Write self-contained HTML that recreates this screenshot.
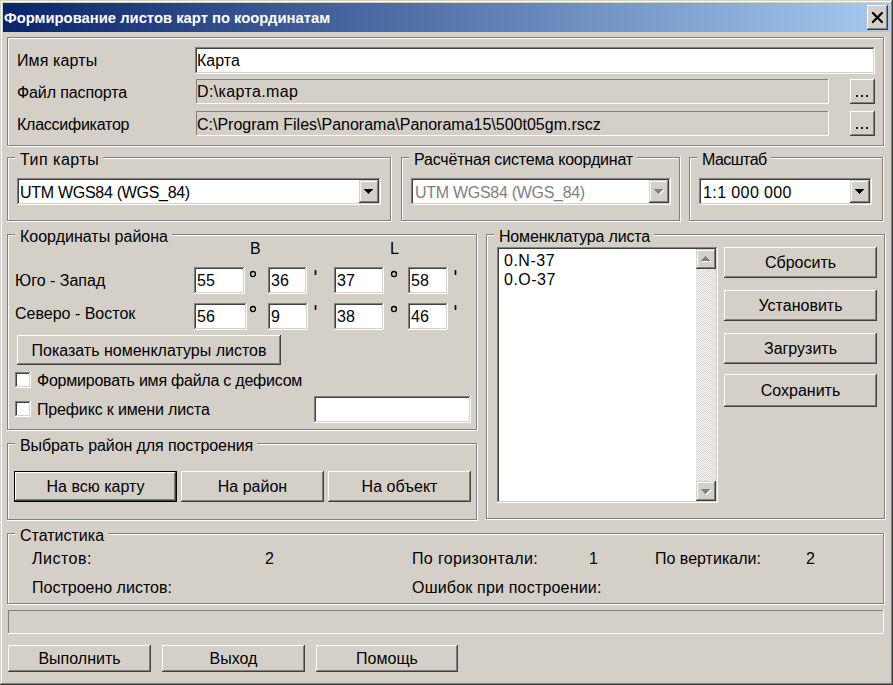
<!DOCTYPE html>
<html><head><meta charset="utf-8"><style>
html,body{margin:0;padding:0;width:893px;height:685px;overflow:hidden;background:#d4d0c8;}
div{position:absolute;box-sizing:border-box;}
.t{position:absolute;font-family:"Liberation Sans",sans-serif;font-size:16px;line-height:18px;color:#000;white-space:nowrap;}
.gl{background:#d4d0c8;padding:0 4px 0 5px;}
.tt{position:absolute;font-family:"Liberation Sans",sans-serif;font-weight:bold;font-size:14.8px;line-height:18px;color:#fff;white-space:nowrap;}
</style></head><body>
<div style="left:1px;top:1px;width:891px;height:683px;background:#d4d0c8;"></div>
<div style="left:0px;top:0px;width:892px;height:1px;background:#d4d0c8;"></div>
<div style="left:0px;top:0px;width:1px;height:684px;background:#d4d0c8;"></div>
<div style="left:0px;top:684px;width:893px;height:1px;background:#404040;"></div>
<div style="left:892px;top:0px;width:1px;height:685px;background:#404040;"></div>
<div style="left:1px;top:1px;width:890px;height:1px;background:#ffffff;"></div>
<div style="left:1px;top:1px;width:1px;height:682px;background:#ffffff;"></div>
<div style="left:1px;top:683px;width:891px;height:1px;background:#808080;"></div>
<div style="left:891px;top:1px;width:1px;height:683px;background:#808080;"></div>
<div style="left:3px;top:3px;width:887px;height:29px;background:linear-gradient(to right,#0a246a,#a6caf0);"></div>
<span class="tt" style="left:4px;top:9px;">Формирование листов карт по координатам</span>
<div style="left:868px;top:6px;width:19px;height:23px;background:#d4d0c8;"></div>
<div style="left:867px;top:5px;width:20px;height:1px;background:#ffffff;"></div>
<div style="left:867px;top:5px;width:1px;height:24px;background:#ffffff;"></div>
<div style="left:867px;top:29px;width:21px;height:1px;background:#404040;"></div>
<div style="left:887px;top:5px;width:1px;height:25px;background:#404040;"></div>
<div style="left:868px;top:6px;width:18px;height:1px;background:#d4d0c8;"></div>
<div style="left:868px;top:6px;width:1px;height:22px;background:#d4d0c8;"></div>
<div style="left:868px;top:28px;width:19px;height:1px;background:#808080;"></div>
<div style="left:886px;top:6px;width:1px;height:23px;background:#808080;"></div>
<svg style="position:absolute;left:867px;top:5px" width="21" height="25"><path d="M5.9 8 L14.9 17 M14.9 8 L5.9 17" stroke="#000" stroke-width="2.2" stroke-linecap="round" fill="none"/></svg>
<div style="left:7px;top:37px;width:877px;height:1px;background:#808080;"></div>
<div style="left:7px;top:37px;width:1px;height:109px;background:#808080;"></div>
<div style="left:7px;top:146px;width:878px;height:1px;background:#ffffff;"></div>
<div style="left:884px;top:37px;width:1px;height:110px;background:#ffffff;"></div>
<div style="left:8px;top:38px;width:875px;height:1px;background:#ffffff;"></div>
<div style="left:8px;top:38px;width:1px;height:107px;background:#ffffff;"></div>
<div style="left:8px;top:145px;width:876px;height:1px;background:#808080;"></div>
<div style="left:883px;top:38px;width:1px;height:108px;background:#808080;"></div>
<span class="t" style="left:17px;top:52px;letter-spacing:0.12px;">Имя карты</span>
<span class="t" style="left:17px;top:84px;letter-spacing:-0.12px;">Файл паспорта</span>
<span class="t" style="left:17px;top:116px;letter-spacing:-0.25px;">Классификатор</span>
<div style="left:195px;top:47px;width:679px;height:1px;background:#808080;"></div>
<div style="left:195px;top:47px;width:1px;height:26px;background:#808080;"></div>
<div style="left:195px;top:73px;width:680px;height:1px;background:#ffffff;"></div>
<div style="left:874px;top:47px;width:1px;height:27px;background:#ffffff;"></div>
<div style="left:197px;top:49px;width:676px;height:23px;background:#ffffff;"></div>
<div style="left:196px;top:48px;width:677px;height:1px;background:#404040;"></div>
<div style="left:196px;top:48px;width:1px;height:24px;background:#404040;"></div>
<div style="left:196px;top:72px;width:678px;height:1px;background:#d4d0c8;"></div>
<div style="left:873px;top:48px;width:1px;height:25px;background:#d4d0c8;"></div>
<span class="t" style="left:197px;top:52px;">Карта</span>
<div style="left:196px;top:79px;width:632px;height:1px;background:#808080;"></div>
<div style="left:196px;top:79px;width:1px;height:24px;background:#808080;"></div>
<div style="left:196px;top:103px;width:633px;height:1px;background:#ffffff;"></div>
<div style="left:828px;top:79px;width:1px;height:25px;background:#ffffff;"></div>
<span class="t" style="left:197px;top:83px;letter-spacing:0.36px;">D:\карта.map</span>
<div style="left:196px;top:111px;width:632px;height:1px;background:#808080;"></div>
<div style="left:196px;top:111px;width:1px;height:24px;background:#808080;"></div>
<div style="left:196px;top:135px;width:633px;height:1px;background:#ffffff;"></div>
<div style="left:828px;top:111px;width:1px;height:25px;background:#ffffff;"></div>
<span class="t" style="left:197px;top:116px;">C:\Program Files\Panorama\Panorama15\500t05gm.rscz</span>
<div style="left:851px;top:80px;width:23px;height:23px;background:#d4d0c8;"></div>
<div style="left:850px;top:79px;width:24px;height:1px;background:#ffffff;"></div>
<div style="left:850px;top:79px;width:1px;height:24px;background:#ffffff;"></div>
<div style="left:850px;top:103px;width:25px;height:1px;background:#404040;"></div>
<div style="left:874px;top:79px;width:1px;height:25px;background:#404040;"></div>
<div style="left:851px;top:80px;width:22px;height:1px;background:#d4d0c8;"></div>
<div style="left:851px;top:80px;width:1px;height:22px;background:#d4d0c8;"></div>
<div style="left:851px;top:102px;width:23px;height:1px;background:#808080;"></div>
<div style="left:873px;top:80px;width:1px;height:23px;background:#808080;"></div>
<div style="left:856px;top:95px;width:2px;height:2px;background:#1a1a1a;"></div>
<div style="left:861px;top:95px;width:2px;height:2px;background:#1a1a1a;"></div>
<div style="left:866px;top:95px;width:2px;height:2px;background:#1a1a1a;"></div>
<div style="left:851px;top:112px;width:23px;height:23px;background:#d4d0c8;"></div>
<div style="left:850px;top:111px;width:24px;height:1px;background:#ffffff;"></div>
<div style="left:850px;top:111px;width:1px;height:24px;background:#ffffff;"></div>
<div style="left:850px;top:135px;width:25px;height:1px;background:#404040;"></div>
<div style="left:874px;top:111px;width:1px;height:25px;background:#404040;"></div>
<div style="left:851px;top:112px;width:22px;height:1px;background:#d4d0c8;"></div>
<div style="left:851px;top:112px;width:1px;height:22px;background:#d4d0c8;"></div>
<div style="left:851px;top:134px;width:23px;height:1px;background:#808080;"></div>
<div style="left:873px;top:112px;width:1px;height:23px;background:#808080;"></div>
<div style="left:856px;top:127px;width:2px;height:2px;background:#1a1a1a;"></div>
<div style="left:861px;top:127px;width:2px;height:2px;background:#1a1a1a;"></div>
<div style="left:866px;top:127px;width:2px;height:2px;background:#1a1a1a;"></div>
<div style="left:7px;top:157px;width:384px;height:1px;background:#808080;"></div>
<div style="left:7px;top:157px;width:1px;height:64px;background:#808080;"></div>
<div style="left:7px;top:221px;width:385px;height:1px;background:#ffffff;"></div>
<div style="left:391px;top:157px;width:1px;height:65px;background:#ffffff;"></div>
<div style="left:8px;top:158px;width:382px;height:1px;background:#ffffff;"></div>
<div style="left:8px;top:158px;width:1px;height:62px;background:#ffffff;"></div>
<div style="left:8px;top:220px;width:383px;height:1px;background:#808080;"></div>
<div style="left:390px;top:158px;width:1px;height:63px;background:#808080;"></div>
<span class="t gl" style="left:15px;top:151px;letter-spacing:0.5px">Тип карты</span>
<div style="left:17px;top:178px;width:363px;height:1px;background:#808080;"></div>
<div style="left:17px;top:178px;width:1px;height:26px;background:#808080;"></div>
<div style="left:17px;top:204px;width:364px;height:1px;background:#ffffff;"></div>
<div style="left:380px;top:178px;width:1px;height:27px;background:#ffffff;"></div>
<div style="left:19px;top:180px;width:360px;height:23px;background:#ffffff;"></div>
<div style="left:18px;top:179px;width:361px;height:1px;background:#404040;"></div>
<div style="left:18px;top:179px;width:1px;height:24px;background:#404040;"></div>
<div style="left:18px;top:203px;width:362px;height:1px;background:#d4d0c8;"></div>
<div style="left:379px;top:179px;width:1px;height:25px;background:#d4d0c8;"></div>
<div style="left:360px;top:181px;width:18px;height:21px;background:#d4d0c8;"></div>
<div style="left:359px;top:180px;width:19px;height:1px;background:#d4d0c8;"></div>
<div style="left:359px;top:180px;width:1px;height:22px;background:#d4d0c8;"></div>
<div style="left:359px;top:202px;width:20px;height:1px;background:#404040;"></div>
<div style="left:378px;top:180px;width:1px;height:23px;background:#404040;"></div>
<div style="left:360px;top:181px;width:17px;height:1px;background:#ffffff;"></div>
<div style="left:360px;top:181px;width:1px;height:20px;background:#ffffff;"></div>
<div style="left:360px;top:201px;width:18px;height:1px;background:#808080;"></div>
<div style="left:377px;top:181px;width:1px;height:21px;background:#808080;"></div>
<div style="left:364px;top:189px;width:9px;height:1px;background:#000;"></div>
<div style="left:365px;top:190px;width:7px;height:1px;background:#000;"></div>
<div style="left:366px;top:191px;width:5px;height:1px;background:#000;"></div>
<div style="left:367px;top:192px;width:3px;height:1px;background:#000;"></div>
<div style="left:368px;top:193px;width:1px;height:1px;background:#000;"></div>
<span class="t" style="left:20px;top:184px;letter-spacing:-0.29px;">UTM WGS84 (WGS_84)</span>
<div style="left:401px;top:157px;width:279px;height:1px;background:#808080;"></div>
<div style="left:401px;top:157px;width:1px;height:64px;background:#808080;"></div>
<div style="left:401px;top:221px;width:280px;height:1px;background:#ffffff;"></div>
<div style="left:680px;top:157px;width:1px;height:65px;background:#ffffff;"></div>
<div style="left:402px;top:158px;width:277px;height:1px;background:#ffffff;"></div>
<div style="left:402px;top:158px;width:1px;height:62px;background:#ffffff;"></div>
<div style="left:402px;top:220px;width:278px;height:1px;background:#808080;"></div>
<div style="left:679px;top:158px;width:1px;height:63px;background:#808080;"></div>
<span class="t gl" style="left:409px;top:151px;letter-spacing:-0.19px">Расчётная система координат</span>
<div style="left:411px;top:178px;width:259px;height:1px;background:#808080;"></div>
<div style="left:411px;top:178px;width:1px;height:26px;background:#808080;"></div>
<div style="left:411px;top:204px;width:260px;height:1px;background:#ffffff;"></div>
<div style="left:670px;top:178px;width:1px;height:27px;background:#ffffff;"></div>
<div style="left:413px;top:180px;width:256px;height:23px;background:#ffffff;"></div>
<div style="left:412px;top:179px;width:257px;height:1px;background:#404040;"></div>
<div style="left:412px;top:179px;width:1px;height:24px;background:#404040;"></div>
<div style="left:412px;top:203px;width:258px;height:1px;background:#d4d0c8;"></div>
<div style="left:669px;top:179px;width:1px;height:25px;background:#d4d0c8;"></div>
<div style="left:650px;top:181px;width:18px;height:21px;background:#d4d0c8;"></div>
<div style="left:649px;top:180px;width:19px;height:1px;background:#d4d0c8;"></div>
<div style="left:649px;top:180px;width:1px;height:22px;background:#d4d0c8;"></div>
<div style="left:649px;top:202px;width:20px;height:1px;background:#404040;"></div>
<div style="left:668px;top:180px;width:1px;height:23px;background:#404040;"></div>
<div style="left:650px;top:181px;width:17px;height:1px;background:#ffffff;"></div>
<div style="left:650px;top:181px;width:1px;height:20px;background:#ffffff;"></div>
<div style="left:650px;top:201px;width:18px;height:1px;background:#808080;"></div>
<div style="left:667px;top:181px;width:1px;height:21px;background:#808080;"></div>
<div style="left:655px;top:190px;width:9px;height:1px;background:#ffffff;"></div>
<div style="left:656px;top:191px;width:7px;height:1px;background:#ffffff;"></div>
<div style="left:657px;top:192px;width:5px;height:1px;background:#ffffff;"></div>
<div style="left:658px;top:193px;width:3px;height:1px;background:#ffffff;"></div>
<div style="left:659px;top:194px;width:1px;height:1px;background:#ffffff;"></div>
<div style="left:654px;top:189px;width:9px;height:1px;background:#808080;"></div>
<div style="left:655px;top:190px;width:7px;height:1px;background:#808080;"></div>
<div style="left:656px;top:191px;width:5px;height:1px;background:#808080;"></div>
<div style="left:657px;top:192px;width:3px;height:1px;background:#808080;"></div>
<div style="left:658px;top:193px;width:1px;height:1px;background:#808080;"></div>
<span class="t" style="left:415px;top:184px;color:#808080;letter-spacing:-0.29px;">UTM WGS84 (WGS_84)</span>
<div style="left:689px;top:157px;width:194px;height:1px;background:#808080;"></div>
<div style="left:689px;top:157px;width:1px;height:64px;background:#808080;"></div>
<div style="left:689px;top:221px;width:195px;height:1px;background:#ffffff;"></div>
<div style="left:883px;top:157px;width:1px;height:65px;background:#ffffff;"></div>
<div style="left:690px;top:158px;width:192px;height:1px;background:#ffffff;"></div>
<div style="left:690px;top:158px;width:1px;height:62px;background:#ffffff;"></div>
<div style="left:690px;top:220px;width:193px;height:1px;background:#808080;"></div>
<div style="left:882px;top:158px;width:1px;height:63px;background:#808080;"></div>
<span class="t gl" style="left:697px;top:151px;letter-spacing:-0.55px">Масштаб</span>
<div style="left:699px;top:178px;width:172px;height:1px;background:#808080;"></div>
<div style="left:699px;top:178px;width:1px;height:26px;background:#808080;"></div>
<div style="left:699px;top:204px;width:173px;height:1px;background:#ffffff;"></div>
<div style="left:871px;top:178px;width:1px;height:27px;background:#ffffff;"></div>
<div style="left:701px;top:180px;width:169px;height:23px;background:#ffffff;"></div>
<div style="left:700px;top:179px;width:170px;height:1px;background:#404040;"></div>
<div style="left:700px;top:179px;width:1px;height:24px;background:#404040;"></div>
<div style="left:700px;top:203px;width:171px;height:1px;background:#d4d0c8;"></div>
<div style="left:870px;top:179px;width:1px;height:25px;background:#d4d0c8;"></div>
<div style="left:851px;top:181px;width:18px;height:21px;background:#d4d0c8;"></div>
<div style="left:850px;top:180px;width:19px;height:1px;background:#d4d0c8;"></div>
<div style="left:850px;top:180px;width:1px;height:22px;background:#d4d0c8;"></div>
<div style="left:850px;top:202px;width:20px;height:1px;background:#404040;"></div>
<div style="left:869px;top:180px;width:1px;height:23px;background:#404040;"></div>
<div style="left:851px;top:181px;width:17px;height:1px;background:#ffffff;"></div>
<div style="left:851px;top:181px;width:1px;height:20px;background:#ffffff;"></div>
<div style="left:851px;top:201px;width:18px;height:1px;background:#808080;"></div>
<div style="left:868px;top:181px;width:1px;height:21px;background:#808080;"></div>
<div style="left:855px;top:189px;width:9px;height:1px;background:#000;"></div>
<div style="left:856px;top:190px;width:7px;height:1px;background:#000;"></div>
<div style="left:857px;top:191px;width:5px;height:1px;background:#000;"></div>
<div style="left:858px;top:192px;width:3px;height:1px;background:#000;"></div>
<div style="left:859px;top:193px;width:1px;height:1px;background:#000;"></div>
<span class="t" style="left:703px;top:184px;letter-spacing:0.4px;">1:1 000 000</span>
<div style="left:7px;top:234px;width:470px;height:1px;background:#808080;"></div>
<div style="left:7px;top:234px;width:1px;height:196px;background:#808080;"></div>
<div style="left:7px;top:430px;width:471px;height:1px;background:#ffffff;"></div>
<div style="left:477px;top:234px;width:1px;height:197px;background:#ffffff;"></div>
<div style="left:8px;top:235px;width:468px;height:1px;background:#ffffff;"></div>
<div style="left:8px;top:235px;width:1px;height:194px;background:#ffffff;"></div>
<div style="left:8px;top:429px;width:469px;height:1px;background:#808080;"></div>
<div style="left:476px;top:235px;width:1px;height:195px;background:#808080;"></div>
<span class="t gl" style="left:15px;top:228px;letter-spacing:0px">Координаты района</span>
<span class="t" style="left:250px;top:240px;">B</span>
<span class="t" style="left:390px;top:240px;">L</span>
<span class="t" style="left:15px;top:272px;">Юго - Запад</span>
<span class="t" style="left:15px;top:305px;">Северо - Восток</span>
<div style="left:194px;top:267px;width:50px;height:1px;background:#808080;"></div>
<div style="left:194px;top:267px;width:1px;height:26px;background:#808080;"></div>
<div style="left:194px;top:293px;width:51px;height:1px;background:#ffffff;"></div>
<div style="left:244px;top:267px;width:1px;height:27px;background:#ffffff;"></div>
<div style="left:196px;top:269px;width:47px;height:23px;background:#ffffff;"></div>
<div style="left:195px;top:268px;width:48px;height:1px;background:#404040;"></div>
<div style="left:195px;top:268px;width:1px;height:24px;background:#404040;"></div>
<div style="left:195px;top:292px;width:49px;height:1px;background:#d4d0c8;"></div>
<div style="left:243px;top:268px;width:1px;height:25px;background:#d4d0c8;"></div>
<span class="t" style="left:197px;top:272px;">55</span>
<div style="left:268px;top:267px;width:38px;height:1px;background:#808080;"></div>
<div style="left:268px;top:267px;width:1px;height:26px;background:#808080;"></div>
<div style="left:268px;top:293px;width:39px;height:1px;background:#ffffff;"></div>
<div style="left:306px;top:267px;width:1px;height:27px;background:#ffffff;"></div>
<div style="left:270px;top:269px;width:35px;height:23px;background:#ffffff;"></div>
<div style="left:269px;top:268px;width:36px;height:1px;background:#404040;"></div>
<div style="left:269px;top:268px;width:1px;height:24px;background:#404040;"></div>
<div style="left:269px;top:292px;width:37px;height:1px;background:#d4d0c8;"></div>
<div style="left:305px;top:268px;width:1px;height:25px;background:#d4d0c8;"></div>
<span class="t" style="left:271px;top:272px;">36</span>
<div style="left:334px;top:267px;width:49px;height:1px;background:#808080;"></div>
<div style="left:334px;top:267px;width:1px;height:26px;background:#808080;"></div>
<div style="left:334px;top:293px;width:50px;height:1px;background:#ffffff;"></div>
<div style="left:383px;top:267px;width:1px;height:27px;background:#ffffff;"></div>
<div style="left:336px;top:269px;width:46px;height:23px;background:#ffffff;"></div>
<div style="left:335px;top:268px;width:47px;height:1px;background:#404040;"></div>
<div style="left:335px;top:268px;width:1px;height:24px;background:#404040;"></div>
<div style="left:335px;top:292px;width:48px;height:1px;background:#d4d0c8;"></div>
<div style="left:382px;top:268px;width:1px;height:25px;background:#d4d0c8;"></div>
<span class="t" style="left:337px;top:272px;">37</span>
<div style="left:408px;top:267px;width:39px;height:1px;background:#808080;"></div>
<div style="left:408px;top:267px;width:1px;height:26px;background:#808080;"></div>
<div style="left:408px;top:293px;width:40px;height:1px;background:#ffffff;"></div>
<div style="left:447px;top:267px;width:1px;height:27px;background:#ffffff;"></div>
<div style="left:410px;top:269px;width:36px;height:23px;background:#ffffff;"></div>
<div style="left:409px;top:268px;width:37px;height:1px;background:#404040;"></div>
<div style="left:409px;top:268px;width:1px;height:24px;background:#404040;"></div>
<div style="left:409px;top:292px;width:38px;height:1px;background:#d4d0c8;"></div>
<div style="left:446px;top:268px;width:1px;height:25px;background:#d4d0c8;"></div>
<span class="t" style="left:411px;top:272px;">58</span>
<svg style="position:absolute;left:248px;top:269px" width="10" height="10"><ellipse cx="5" cy="5" rx="2.45" ry="2.55" stroke="#000" stroke-width="1.35" fill="none"/></svg>
<svg style="position:absolute;left:389px;top:269px" width="10" height="10"><ellipse cx="5" cy="5" rx="2.45" ry="2.55" stroke="#000" stroke-width="1.35" fill="none"/></svg>
<div style="left:314px;top:270px;width:3px;height:5px;background:#8a8682;border-radius:1px;"></div>
<div style="left:315px;top:270px;width:1px;height:5px;background:#000;"></div>
<div style="left:454px;top:270px;width:3px;height:5px;background:#8a8682;border-radius:1px;"></div>
<div style="left:455px;top:270px;width:1px;height:5px;background:#000;"></div>
<div style="left:194px;top:303px;width:52px;height:1px;background:#808080;"></div>
<div style="left:194px;top:303px;width:1px;height:26px;background:#808080;"></div>
<div style="left:194px;top:329px;width:53px;height:1px;background:#ffffff;"></div>
<div style="left:246px;top:303px;width:1px;height:27px;background:#ffffff;"></div>
<div style="left:196px;top:305px;width:49px;height:23px;background:#ffffff;"></div>
<div style="left:195px;top:304px;width:50px;height:1px;background:#404040;"></div>
<div style="left:195px;top:304px;width:1px;height:24px;background:#404040;"></div>
<div style="left:195px;top:328px;width:51px;height:1px;background:#d4d0c8;"></div>
<div style="left:245px;top:304px;width:1px;height:25px;background:#d4d0c8;"></div>
<span class="t" style="left:197px;top:308px;">56</span>
<div style="left:268px;top:303px;width:39px;height:1px;background:#808080;"></div>
<div style="left:268px;top:303px;width:1px;height:26px;background:#808080;"></div>
<div style="left:268px;top:329px;width:40px;height:1px;background:#ffffff;"></div>
<div style="left:307px;top:303px;width:1px;height:27px;background:#ffffff;"></div>
<div style="left:270px;top:305px;width:36px;height:23px;background:#ffffff;"></div>
<div style="left:269px;top:304px;width:37px;height:1px;background:#404040;"></div>
<div style="left:269px;top:304px;width:1px;height:24px;background:#404040;"></div>
<div style="left:269px;top:328px;width:38px;height:1px;background:#d4d0c8;"></div>
<div style="left:306px;top:304px;width:1px;height:25px;background:#d4d0c8;"></div>
<span class="t" style="left:271px;top:308px;">9</span>
<div style="left:334px;top:303px;width:49px;height:1px;background:#808080;"></div>
<div style="left:334px;top:303px;width:1px;height:26px;background:#808080;"></div>
<div style="left:334px;top:329px;width:50px;height:1px;background:#ffffff;"></div>
<div style="left:383px;top:303px;width:1px;height:27px;background:#ffffff;"></div>
<div style="left:336px;top:305px;width:46px;height:23px;background:#ffffff;"></div>
<div style="left:335px;top:304px;width:47px;height:1px;background:#404040;"></div>
<div style="left:335px;top:304px;width:1px;height:24px;background:#404040;"></div>
<div style="left:335px;top:328px;width:48px;height:1px;background:#d4d0c8;"></div>
<div style="left:382px;top:304px;width:1px;height:25px;background:#d4d0c8;"></div>
<span class="t" style="left:337px;top:308px;">38</span>
<div style="left:408px;top:303px;width:39px;height:1px;background:#808080;"></div>
<div style="left:408px;top:303px;width:1px;height:26px;background:#808080;"></div>
<div style="left:408px;top:329px;width:40px;height:1px;background:#ffffff;"></div>
<div style="left:447px;top:303px;width:1px;height:27px;background:#ffffff;"></div>
<div style="left:410px;top:305px;width:36px;height:23px;background:#ffffff;"></div>
<div style="left:409px;top:304px;width:37px;height:1px;background:#404040;"></div>
<div style="left:409px;top:304px;width:1px;height:24px;background:#404040;"></div>
<div style="left:409px;top:328px;width:38px;height:1px;background:#d4d0c8;"></div>
<div style="left:446px;top:304px;width:1px;height:25px;background:#d4d0c8;"></div>
<span class="t" style="left:411px;top:308px;">46</span>
<svg style="position:absolute;left:248px;top:304px" width="10" height="10"><ellipse cx="5" cy="5" rx="2.45" ry="2.55" stroke="#000" stroke-width="1.35" fill="none"/></svg>
<svg style="position:absolute;left:389px;top:304px" width="10" height="10"><ellipse cx="5" cy="5" rx="2.45" ry="2.55" stroke="#000" stroke-width="1.35" fill="none"/></svg>
<div style="left:314px;top:305px;width:3px;height:5px;background:#8a8682;border-radius:1px;"></div>
<div style="left:315px;top:305px;width:1px;height:5px;background:#000;"></div>
<div style="left:454px;top:305px;width:3px;height:5px;background:#8a8682;border-radius:1px;"></div>
<div style="left:455px;top:305px;width:1px;height:5px;background:#000;"></div>
<div style="left:18px;top:336px;width:262px;height:28px;background:#d4d0c8;"></div>
<div style="left:17px;top:335px;width:263px;height:1px;background:#ffffff;"></div>
<div style="left:17px;top:335px;width:1px;height:29px;background:#ffffff;"></div>
<div style="left:17px;top:364px;width:264px;height:1px;background:#404040;"></div>
<div style="left:280px;top:335px;width:1px;height:30px;background:#404040;"></div>
<div style="left:18px;top:336px;width:261px;height:1px;background:#d4d0c8;"></div>
<div style="left:18px;top:336px;width:1px;height:27px;background:#d4d0c8;"></div>
<div style="left:18px;top:363px;width:262px;height:1px;background:#808080;"></div>
<div style="left:279px;top:336px;width:1px;height:28px;background:#808080;"></div>
<span class="t" style="left:17px;top:342px;width:264px;text-align:center">Показать номенклатуры листов</span>
<div style="left:15px;top:372px;width:15px;height:1px;background:#808080;"></div>
<div style="left:15px;top:372px;width:1px;height:15px;background:#808080;"></div>
<div style="left:15px;top:387px;width:16px;height:1px;background:#ffffff;"></div>
<div style="left:30px;top:372px;width:1px;height:16px;background:#ffffff;"></div>
<div style="left:17px;top:374px;width:12px;height:12px;background:#ffffff;"></div>
<div style="left:16px;top:373px;width:13px;height:1px;background:#404040;"></div>
<div style="left:16px;top:373px;width:1px;height:13px;background:#404040;"></div>
<div style="left:16px;top:386px;width:14px;height:1px;background:#d4d0c8;"></div>
<div style="left:29px;top:373px;width:1px;height:14px;background:#d4d0c8;"></div>
<span class="t" style="left:37px;top:372px;letter-spacing:-0.23px;">Формировать имя файла с дефисом</span>
<div style="left:15px;top:401px;width:15px;height:1px;background:#808080;"></div>
<div style="left:15px;top:401px;width:1px;height:15px;background:#808080;"></div>
<div style="left:15px;top:416px;width:16px;height:1px;background:#ffffff;"></div>
<div style="left:30px;top:401px;width:1px;height:16px;background:#ffffff;"></div>
<div style="left:17px;top:403px;width:12px;height:12px;background:#ffffff;"></div>
<div style="left:16px;top:402px;width:13px;height:1px;background:#404040;"></div>
<div style="left:16px;top:402px;width:1px;height:13px;background:#404040;"></div>
<div style="left:16px;top:415px;width:14px;height:1px;background:#d4d0c8;"></div>
<div style="left:29px;top:402px;width:1px;height:14px;background:#d4d0c8;"></div>
<span class="t" style="left:37px;top:401px;letter-spacing:-0.15px;">Префикс к имени листа</span>
<div style="left:314px;top:396px;width:156px;height:1px;background:#808080;"></div>
<div style="left:314px;top:396px;width:1px;height:26px;background:#808080;"></div>
<div style="left:314px;top:422px;width:157px;height:1px;background:#ffffff;"></div>
<div style="left:470px;top:396px;width:1px;height:27px;background:#ffffff;"></div>
<div style="left:316px;top:398px;width:153px;height:23px;background:#ffffff;"></div>
<div style="left:315px;top:397px;width:154px;height:1px;background:#404040;"></div>
<div style="left:315px;top:397px;width:1px;height:24px;background:#404040;"></div>
<div style="left:315px;top:421px;width:155px;height:1px;background:#d4d0c8;"></div>
<div style="left:469px;top:397px;width:1px;height:25px;background:#d4d0c8;"></div>
<div style="left:7px;top:443px;width:470px;height:1px;background:#808080;"></div>
<div style="left:7px;top:443px;width:1px;height:77px;background:#808080;"></div>
<div style="left:7px;top:520px;width:471px;height:1px;background:#ffffff;"></div>
<div style="left:477px;top:443px;width:1px;height:78px;background:#ffffff;"></div>
<div style="left:8px;top:444px;width:468px;height:1px;background:#ffffff;"></div>
<div style="left:8px;top:444px;width:1px;height:75px;background:#ffffff;"></div>
<div style="left:8px;top:519px;width:469px;height:1px;background:#808080;"></div>
<div style="left:476px;top:444px;width:1px;height:76px;background:#808080;"></div>
<span class="t gl" style="left:15px;top:437px;letter-spacing:-0.09px">Выбрать район для построения</span>
<div style="left:14px;top:471px;width:163px;height:31px;border:1px solid #000;"></div>
<div style="left:16px;top:473px;width:159px;height:27px;background:#d4d0c8;"></div>
<div style="left:15px;top:472px;width:160px;height:1px;background:#ffffff;"></div>
<div style="left:15px;top:472px;width:1px;height:28px;background:#ffffff;"></div>
<div style="left:15px;top:500px;width:161px;height:1px;background:#404040;"></div>
<div style="left:175px;top:472px;width:1px;height:29px;background:#404040;"></div>
<div style="left:16px;top:473px;width:158px;height:1px;background:#d4d0c8;"></div>
<div style="left:16px;top:473px;width:1px;height:26px;background:#d4d0c8;"></div>
<div style="left:16px;top:499px;width:159px;height:1px;background:#808080;"></div>
<div style="left:174px;top:473px;width:1px;height:27px;background:#808080;"></div>
<span class="t" style="left:14px;top:478px;width:163px;text-align:center">На всю карту</span>
<div style="left:182px;top:472px;width:141px;height:29px;background:#d4d0c8;"></div>
<div style="left:181px;top:471px;width:142px;height:1px;background:#ffffff;"></div>
<div style="left:181px;top:471px;width:1px;height:30px;background:#ffffff;"></div>
<div style="left:181px;top:501px;width:143px;height:1px;background:#404040;"></div>
<div style="left:323px;top:471px;width:1px;height:31px;background:#404040;"></div>
<div style="left:182px;top:472px;width:140px;height:1px;background:#d4d0c8;"></div>
<div style="left:182px;top:472px;width:1px;height:28px;background:#d4d0c8;"></div>
<div style="left:182px;top:500px;width:141px;height:1px;background:#808080;"></div>
<div style="left:322px;top:472px;width:1px;height:29px;background:#808080;"></div>
<span class="t" style="left:181px;top:478px;width:143px;text-align:center">На район</span>
<div style="left:329px;top:472px;width:141px;height:29px;background:#d4d0c8;"></div>
<div style="left:328px;top:471px;width:142px;height:1px;background:#ffffff;"></div>
<div style="left:328px;top:471px;width:1px;height:30px;background:#ffffff;"></div>
<div style="left:328px;top:501px;width:143px;height:1px;background:#404040;"></div>
<div style="left:470px;top:471px;width:1px;height:31px;background:#404040;"></div>
<div style="left:329px;top:472px;width:140px;height:1px;background:#d4d0c8;"></div>
<div style="left:329px;top:472px;width:1px;height:28px;background:#d4d0c8;"></div>
<div style="left:329px;top:500px;width:141px;height:1px;background:#808080;"></div>
<div style="left:469px;top:472px;width:1px;height:29px;background:#808080;"></div>
<span class="t" style="left:328px;top:478px;width:143px;text-align:center">На объект</span>
<div style="left:486px;top:234px;width:399px;height:1px;background:#808080;"></div>
<div style="left:486px;top:234px;width:1px;height:285px;background:#808080;"></div>
<div style="left:486px;top:519px;width:400px;height:1px;background:#ffffff;"></div>
<div style="left:885px;top:234px;width:1px;height:286px;background:#ffffff;"></div>
<div style="left:487px;top:235px;width:397px;height:1px;background:#ffffff;"></div>
<div style="left:487px;top:235px;width:1px;height:283px;background:#ffffff;"></div>
<div style="left:487px;top:518px;width:398px;height:1px;background:#808080;"></div>
<div style="left:884px;top:235px;width:1px;height:284px;background:#808080;"></div>
<span class="t gl" style="left:494px;top:228px;letter-spacing:-0.18px">Номенклатура листа</span>
<div style="left:497px;top:247px;width:220px;height:1px;background:#808080;"></div>
<div style="left:497px;top:247px;width:1px;height:255px;background:#808080;"></div>
<div style="left:497px;top:502px;width:221px;height:1px;background:#ffffff;"></div>
<div style="left:717px;top:247px;width:1px;height:256px;background:#ffffff;"></div>
<div style="left:499px;top:249px;width:217px;height:252px;background:#ffffff;"></div>
<div style="left:498px;top:248px;width:218px;height:1px;background:#404040;"></div>
<div style="left:498px;top:248px;width:1px;height:253px;background:#404040;"></div>
<div style="left:498px;top:501px;width:219px;height:1px;background:#d4d0c8;"></div>
<div style="left:716px;top:248px;width:1px;height:254px;background:#d4d0c8;"></div>
<span class="t" style="left:504px;top:252px;letter-spacing:0.5px;">0.N-37</span>
<span class="t" style="left:504px;top:271px;letter-spacing:0.5px;">0.O-37</span>
<div style="left:696px;top:269px;width:20px;height:212px;background-color:#fff;background-image:conic-gradient(#d4d0c8 25%,#fff 0 50%,#d4d0c8 0 75%,#fff 0);background-size:2px 2px;"></div>
<div style="left:697px;top:250px;width:18px;height:18px;background:#d4d0c8;"></div>
<div style="left:696px;top:249px;width:19px;height:1px;background:#d4d0c8;"></div>
<div style="left:696px;top:249px;width:1px;height:19px;background:#d4d0c8;"></div>
<div style="left:696px;top:268px;width:20px;height:1px;background:#404040;"></div>
<div style="left:715px;top:249px;width:1px;height:20px;background:#404040;"></div>
<div style="left:697px;top:250px;width:17px;height:1px;background:#ffffff;"></div>
<div style="left:697px;top:250px;width:1px;height:17px;background:#ffffff;"></div>
<div style="left:697px;top:267px;width:18px;height:1px;background:#808080;"></div>
<div style="left:714px;top:250px;width:1px;height:18px;background:#808080;"></div>
<div style="left:702px;top:261px;width:9px;height:1px;background:#ffffff;"></div>
<div style="left:703px;top:260px;width:7px;height:1px;background:#ffffff;"></div>
<div style="left:704px;top:259px;width:5px;height:1px;background:#ffffff;"></div>
<div style="left:705px;top:258px;width:3px;height:1px;background:#ffffff;"></div>
<div style="left:706px;top:257px;width:1px;height:1px;background:#ffffff;"></div>
<div style="left:701px;top:260px;width:9px;height:1px;background:#808080;"></div>
<div style="left:702px;top:259px;width:7px;height:1px;background:#808080;"></div>
<div style="left:703px;top:258px;width:5px;height:1px;background:#808080;"></div>
<div style="left:704px;top:257px;width:3px;height:1px;background:#808080;"></div>
<div style="left:705px;top:256px;width:1px;height:1px;background:#808080;"></div>
<div style="left:697px;top:482px;width:18px;height:18px;background:#d4d0c8;"></div>
<div style="left:696px;top:481px;width:19px;height:1px;background:#d4d0c8;"></div>
<div style="left:696px;top:481px;width:1px;height:19px;background:#d4d0c8;"></div>
<div style="left:696px;top:500px;width:20px;height:1px;background:#404040;"></div>
<div style="left:715px;top:481px;width:1px;height:20px;background:#404040;"></div>
<div style="left:697px;top:482px;width:17px;height:1px;background:#ffffff;"></div>
<div style="left:697px;top:482px;width:1px;height:17px;background:#ffffff;"></div>
<div style="left:697px;top:499px;width:18px;height:1px;background:#808080;"></div>
<div style="left:714px;top:482px;width:1px;height:18px;background:#808080;"></div>
<div style="left:702px;top:490px;width:9px;height:1px;background:#ffffff;"></div>
<div style="left:703px;top:491px;width:7px;height:1px;background:#ffffff;"></div>
<div style="left:704px;top:492px;width:5px;height:1px;background:#ffffff;"></div>
<div style="left:705px;top:493px;width:3px;height:1px;background:#ffffff;"></div>
<div style="left:706px;top:494px;width:1px;height:1px;background:#ffffff;"></div>
<div style="left:701px;top:489px;width:9px;height:1px;background:#808080;"></div>
<div style="left:702px;top:490px;width:7px;height:1px;background:#808080;"></div>
<div style="left:703px;top:491px;width:5px;height:1px;background:#808080;"></div>
<div style="left:704px;top:492px;width:3px;height:1px;background:#808080;"></div>
<div style="left:705px;top:493px;width:1px;height:1px;background:#808080;"></div>
<div style="left:725px;top:248px;width:151px;height:29px;background:#d4d0c8;"></div>
<div style="left:724px;top:247px;width:152px;height:1px;background:#ffffff;"></div>
<div style="left:724px;top:247px;width:1px;height:30px;background:#ffffff;"></div>
<div style="left:724px;top:277px;width:153px;height:1px;background:#404040;"></div>
<div style="left:876px;top:247px;width:1px;height:31px;background:#404040;"></div>
<div style="left:725px;top:248px;width:150px;height:1px;background:#d4d0c8;"></div>
<div style="left:725px;top:248px;width:1px;height:28px;background:#d4d0c8;"></div>
<div style="left:725px;top:276px;width:151px;height:1px;background:#808080;"></div>
<div style="left:875px;top:248px;width:1px;height:29px;background:#808080;"></div>
<span class="t" style="left:724px;top:254px;width:153px;text-align:center">Сбросить</span>
<div style="left:725px;top:291px;width:151px;height:29px;background:#d4d0c8;"></div>
<div style="left:724px;top:290px;width:152px;height:1px;background:#ffffff;"></div>
<div style="left:724px;top:290px;width:1px;height:30px;background:#ffffff;"></div>
<div style="left:724px;top:320px;width:153px;height:1px;background:#404040;"></div>
<div style="left:876px;top:290px;width:1px;height:31px;background:#404040;"></div>
<div style="left:725px;top:291px;width:150px;height:1px;background:#d4d0c8;"></div>
<div style="left:725px;top:291px;width:1px;height:28px;background:#d4d0c8;"></div>
<div style="left:725px;top:319px;width:151px;height:1px;background:#808080;"></div>
<div style="left:875px;top:291px;width:1px;height:29px;background:#808080;"></div>
<span class="t" style="left:724px;top:297px;width:153px;text-align:center">Установить</span>
<div style="left:725px;top:334px;width:151px;height:29px;background:#d4d0c8;"></div>
<div style="left:724px;top:333px;width:152px;height:1px;background:#ffffff;"></div>
<div style="left:724px;top:333px;width:1px;height:30px;background:#ffffff;"></div>
<div style="left:724px;top:363px;width:153px;height:1px;background:#404040;"></div>
<div style="left:876px;top:333px;width:1px;height:31px;background:#404040;"></div>
<div style="left:725px;top:334px;width:150px;height:1px;background:#d4d0c8;"></div>
<div style="left:725px;top:334px;width:1px;height:28px;background:#d4d0c8;"></div>
<div style="left:725px;top:362px;width:151px;height:1px;background:#808080;"></div>
<div style="left:875px;top:334px;width:1px;height:29px;background:#808080;"></div>
<span class="t" style="left:724px;top:340px;width:153px;text-align:center">Загрузить</span>
<div style="left:725px;top:375px;width:151px;height:31px;background:#d4d0c8;"></div>
<div style="left:724px;top:374px;width:152px;height:1px;background:#ffffff;"></div>
<div style="left:724px;top:374px;width:1px;height:32px;background:#ffffff;"></div>
<div style="left:724px;top:406px;width:153px;height:1px;background:#404040;"></div>
<div style="left:876px;top:374px;width:1px;height:33px;background:#404040;"></div>
<div style="left:725px;top:375px;width:150px;height:1px;background:#d4d0c8;"></div>
<div style="left:725px;top:375px;width:1px;height:30px;background:#d4d0c8;"></div>
<div style="left:725px;top:405px;width:151px;height:1px;background:#808080;"></div>
<div style="left:875px;top:375px;width:1px;height:31px;background:#808080;"></div>
<span class="t" style="left:724px;top:382px;width:153px;text-align:center">Сохранить</span>
<div style="left:7px;top:533px;width:877px;height:1px;background:#808080;"></div>
<div style="left:7px;top:533px;width:1px;height:71px;background:#808080;"></div>
<div style="left:7px;top:604px;width:878px;height:1px;background:#ffffff;"></div>
<div style="left:884px;top:533px;width:1px;height:72px;background:#ffffff;"></div>
<div style="left:8px;top:534px;width:875px;height:1px;background:#ffffff;"></div>
<div style="left:8px;top:534px;width:1px;height:69px;background:#ffffff;"></div>
<div style="left:8px;top:603px;width:876px;height:1px;background:#808080;"></div>
<div style="left:883px;top:534px;width:1px;height:70px;background:#808080;"></div>
<span class="t gl" style="left:15px;top:527px;letter-spacing:0px">Статистика</span>
<span class="t" style="left:32px;top:550px;letter-spacing:0.5px;">Листов:</span>
<span class="t" style="left:265px;top:550px;">2</span>
<span class="t" style="left:412px;top:550px;letter-spacing:0.36px;">По горизонтали:</span>
<span class="t" style="left:589px;top:550px;">1</span>
<span class="t" style="left:655px;top:550px;">По вертикали:</span>
<span class="t" style="left:806px;top:550px;">2</span>
<span class="t" style="left:32px;top:579px;">Построено листов:</span>
<span class="t" style="left:412px;top:579px;letter-spacing:0.19px;">Ошибок при построении:</span>
<div style="left:8px;top:610px;width:875px;height:1px;background:#808080;"></div>
<div style="left:8px;top:610px;width:1px;height:23px;background:#808080;"></div>
<div style="left:8px;top:633px;width:876px;height:1px;background:#ffffff;"></div>
<div style="left:883px;top:610px;width:1px;height:24px;background:#ffffff;"></div>
<div style="left:9px;top:646px;width:141px;height:25px;background:#d4d0c8;"></div>
<div style="left:8px;top:645px;width:142px;height:1px;background:#ffffff;"></div>
<div style="left:8px;top:645px;width:1px;height:26px;background:#ffffff;"></div>
<div style="left:8px;top:671px;width:143px;height:1px;background:#404040;"></div>
<div style="left:150px;top:645px;width:1px;height:27px;background:#404040;"></div>
<div style="left:9px;top:646px;width:140px;height:1px;background:#d4d0c8;"></div>
<div style="left:9px;top:646px;width:1px;height:24px;background:#d4d0c8;"></div>
<div style="left:9px;top:670px;width:141px;height:1px;background:#808080;"></div>
<div style="left:149px;top:646px;width:1px;height:25px;background:#808080;"></div>
<span class="t" style="left:8px;top:650px;width:143px;text-align:center">Выполнить</span>
<div style="left:163px;top:646px;width:141px;height:25px;background:#d4d0c8;"></div>
<div style="left:162px;top:645px;width:142px;height:1px;background:#ffffff;"></div>
<div style="left:162px;top:645px;width:1px;height:26px;background:#ffffff;"></div>
<div style="left:162px;top:671px;width:143px;height:1px;background:#404040;"></div>
<div style="left:304px;top:645px;width:1px;height:27px;background:#404040;"></div>
<div style="left:163px;top:646px;width:140px;height:1px;background:#d4d0c8;"></div>
<div style="left:163px;top:646px;width:1px;height:24px;background:#d4d0c8;"></div>
<div style="left:163px;top:670px;width:141px;height:1px;background:#808080;"></div>
<div style="left:303px;top:646px;width:1px;height:25px;background:#808080;"></div>
<span class="t" style="left:162px;top:650px;width:143px;text-align:center">Выход</span>
<div style="left:317px;top:646px;width:140px;height:25px;background:#d4d0c8;"></div>
<div style="left:316px;top:645px;width:141px;height:1px;background:#ffffff;"></div>
<div style="left:316px;top:645px;width:1px;height:26px;background:#ffffff;"></div>
<div style="left:316px;top:671px;width:142px;height:1px;background:#404040;"></div>
<div style="left:457px;top:645px;width:1px;height:27px;background:#404040;"></div>
<div style="left:317px;top:646px;width:139px;height:1px;background:#d4d0c8;"></div>
<div style="left:317px;top:646px;width:1px;height:24px;background:#d4d0c8;"></div>
<div style="left:317px;top:670px;width:140px;height:1px;background:#808080;"></div>
<div style="left:456px;top:646px;width:1px;height:25px;background:#808080;"></div>
<span class="t" style="left:316px;top:650px;width:142px;text-align:center">Помощь</span>
</body></html>
